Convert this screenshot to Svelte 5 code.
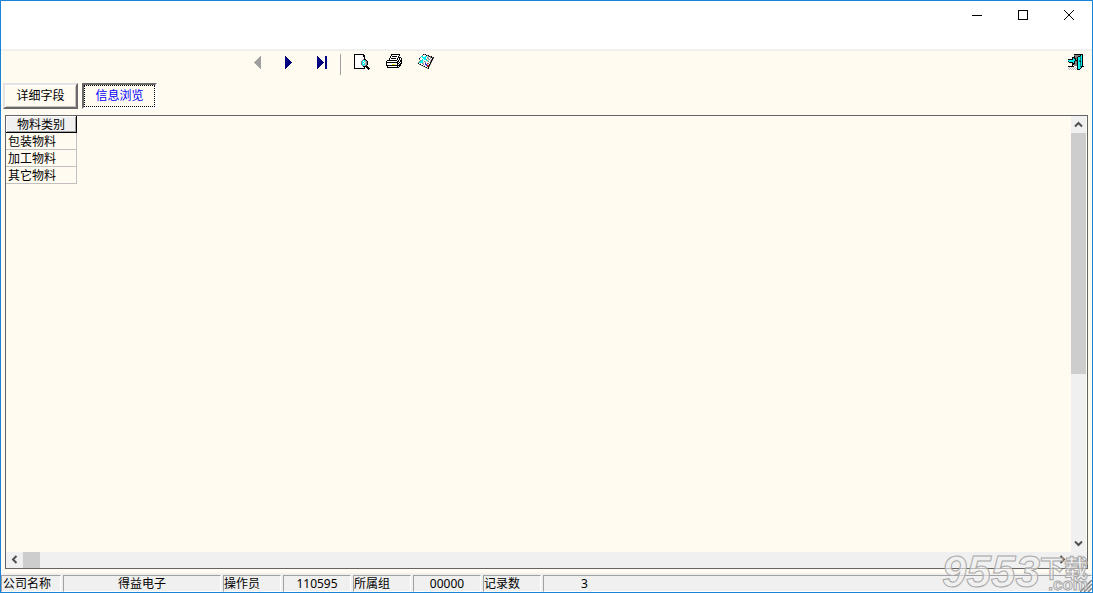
<script lang="ts">
    const colors = {
        k: '#000000',
        w: '#ffffff',
        c: '#00f0f0',
        t: '#008080',
        g: '#808080',
        l: '#c0c0c0',
        y: '#e6e600',
        b: '#2030e0',
        r: '#d02020'
    };

    // one character per pixel, a dot is transparent
    const preview = [
        'kkkkkkkkkk......',
        'kwwwwwwwwkk.....',
        'kwwwwwwwwkk.....',
        'kwwwwwwwwwk.....',
        'kwwwwwwwwwk.....',
        'kwwwwwwwwgkk....',
        'kwwwwwwwgccgk...',
        'kwwwwwwgcwclgk..',
        'kwwwwwwgccwlgk..',
        'kwwwwwwgcwclgk..',
        'kwwwwwwgccclgk..',
        'kwwwwwwwgclgk...',
        'kwwwwwwwwkkkkk..',
        'kwwwwwwwwwk.kkk.',
        'kkkkkkkkkkk..kkk',
        '..............k.'
    ];

    const printer = [
        '.....kkkkkkkkk..',
        '.....kwwwwwwwk..',
        '....kwkkkkkwk...',
        '....kwwwwwwwkkk.',
        '...kwkkkkkwkwkwk',
        '...kwwwwwwwkwkwk',
        '.kkkkkkkkkkwkwkk',
        'kwwwwwwwwwwkkwkk',
        'kkkkkkkkkkkkwkwk',
        'kwwwwwwwwwwkkwkk',
        'kwwwwwyyywwkwkk.',
        'kkkkkkkkkkkkkkk.',
        '.kwwwwwwwwwkwk..',
        '.kkkkkkkkkkkk...',
        '................',
        '................'
    ];

    const report = [
        '.....kgk........',
        '....gwwwkgk.....',
        '...ccwwccwgkgk..',
        '..gwccccwglwgkgk',
        '.kwwwcccwlgwlwkg',
        '.gwwcwccgwlgwgk.',
        '..gcclwwcclwlkg.',
        '.gcccwglwlgwgk..',
        'gcccclwgwwwlkg..',
        'kwlwglwbwrgwk...',
        '.gkwwgwbblwkg...',
        '...gkwlwbrrk....',
        '.....gkwwrkg....',
        '.......gkwk.....',
        '.........gk.....',
        '................'
    ];

    const door = [
        '......kkkkkkkkk.',
        '......ggggggkck.',
        '......kgggkktck.',
        '....kkkggkcctck.',
        '....kckkgkcctck.',
        'kkkkkcckgkcctck.',
        'ccccccckkkcttck.',
        'kccccckggkctkck.',
        '.kkkkckggkcctck.',
        '....kkkggkcctck.',
        '....kkgggkcctck.',
        '....k.gggkcctck.',
        'kkkkkkwwwkcctkkk',
        '.l.l.l.lwkccck..',
        'l.l.l.l.lkcck...',
        '.l.l.l.l.kkk....'
    ];

    const status = [
        { text: '公司名称', size: 'first' },
        { text: '得益电子', size: 'wide' },
        { text: '操作员', size: 'label' },
        { text: '110595', size: 'value' },
        { text: '所属组', size: 'label' },
        { text: '00000', size: 'value' },
        { text: '记录数', size: 'label' },
        { text: '3', size: 'count' }
    ];

    const rows = ['包装物料', '加工物料', '其它物料'];
    const tabs = ['详细字段', '信息浏览'];
    let tab = $state(1);
</script>

{#snippet pixels(map)}
    <svg width="16" height="16" viewBox="0 0 16 16" shape-rendering="crispEdges" aria-hidden="true">
        {#each map as line, y}
            {#each line.split('') as p, x}
                {#if p != '.'}
                    <rect {x} {y} width="1" height="1" fill={colors[p]} />
                {/if}
            {/each}
        {/each}
    </svg>
{/snippet}

{#snippet chevron(d)}
    <svg width="9" height="9" viewBox="0 0 9 9" aria-hidden="true">
        <path {d} fill="none" stroke="#505050" stroke-width="2" />
    </svg>
{/snippet}

<div class="window">
    <header class="titlebar">
        <button aria-label="最小化">
            <svg width="10" height="10" viewBox="0 0 10 10"><path d="M0 5.5h10" /></svg>
        </button>
        <button aria-label="最大化">
            <svg width="10" height="10" viewBox="0 0 10 10"><path d="M.5.5h9v9h-9z" /></svg>
        </button>
        <button aria-label="关闭">
            <svg class="smooth" width="10" height="10" viewBox="0 0 10 10"><path d="M0 0l10 10M10 0l-10 10" /></svg>
        </button>
    </header>

    <div class="toolbar">
        <button aria-label="上一条" disabled>
            <svg width="16" height="16" viewBox="0 0 16 16" shape-rendering="crispEdges"><path d="M11 2v13L4 8.5z" fill="#a0a0a0" /></svg>
        </button>
        <button aria-label="下一条">
            <svg width="16" height="16" viewBox="0 0 16 16" shape-rendering="crispEdges"><path d="M3 2v13l7-6.5z" fill="#000080" /></svg>
        </button>
        <button aria-label="最后一条">
            <svg width="16" height="16" viewBox="0 0 16 16" shape-rendering="crispEdges"><path d="M3 2v13l7-6.5zM11 2h2v13h-2z" fill="#000080" /></svg>
        </button>
        <span class="sep"></span>
        <button aria-label="预览">{@render pixels(preview)}</button>
        <button aria-label="打印">{@render pixels(printer)}</button>
        <button aria-label="报表">{@render pixels(report)}</button>
        <button class="exit" aria-label="退出">{@render pixels(door)}</button>
    </div>

    <div class="tabs">
        {#each tabs as name, i}
            <button class:active={tab == i} onclick={() => (tab = i)}>{name}</button>
        {/each}
    </div>

    <main class="grid">
        <div class="data">
            <table>
                <thead>
                    <tr><th>物料类别</th></tr>
                </thead>
                <tbody>
                    {#each rows as row}
                        <tr><td>{row}</td></tr>
                    {/each}
                </tbody>
            </table>
        </div>
        <div class="vbar">
            <button aria-label="向上滚动">{@render chevron('M1 6.5L4.5 3L8 6.5')}</button>
            <div class="track"><div class="thumb"></div></div>
            <button aria-label="向下滚动">{@render chevron('M1 2.5L4.5 6L8 2.5')}</button>
        </div>
        <div class="hbar">
            <button aria-label="向左滚动">{@render chevron('M6.5 1L3 4.5L6.5 8')}</button>
            <div class="track"><div class="thumb"></div></div>
            <button aria-label="向右滚动">{@render chevron('M2.5 1L6 4.5L2.5 8')}</button>
        </div>
        <div class="corner"></div>
    </main>

    <footer class="status">
        {#each status as cell}
            <span class="cell {cell.size}">{cell.text}</span>
        {/each}
        <svg class="grip" width="12" height="12" viewBox="0 0 12 12" aria-hidden="true">
            <path d="M0 12L12 0M4 12L12 4M8 12L12 8" fill="none" stroke="#808080" stroke-width="1.5" />
        </svg>
    </footer>

    <div class="mark">
        <span class="num">9553</span>
        <span class="side"><span class="down">下载</span><span class="com">.com</span></span>
    </div>
</div>

<style>
    :global(body) {
        margin: 0;
    }

    .window {
        position: relative;
        box-sizing: border-box;
        height: 100vh;
        display: flex;
        flex-direction: column;
        border: 1px solid #1883d7;
        background: #fffbf0;
        color: #000;
        font: 12px/16px "Noto Sans", "Noto Sans CJK SC", sans-serif;
    }

    button {
        display: flex;
        align-items: center;
        justify-content: center;
        padding: 0;
        border: none;
        background: none;
        font: inherit;
        color: inherit;
    }

    svg {
        display: block;
    }

    .titlebar {
        display: flex;
        justify-content: flex-end;
        height: 48px;
        background: #fff;
        border-bottom: 2px solid #f0f0f0;
    }

    .titlebar button {
        width: 46px;
        height: 28px;
    }

    .titlebar path {
        fill: none;
        stroke: #000;
        shape-rendering: crispEdges;
    }

    .titlebar .smooth path {
        shape-rendering: auto;
    }

    .toolbar {
        box-sizing: border-box;
        display: flex;
        align-items: flex-start;
        gap: 16px;
        padding: 3px 8px 0 249px;
        height: 30px;
    }

    .sep {
        width: 1px;
        height: 21px;
        margin: 0 -3px 0 -6px;
        background: #a0a0a0;
    }

    .exit {
        margin-left: auto;
    }

    .tabs {
        display: flex;
        gap: 4px;
        padding: 2px;
    }

    .tabs button {
        box-sizing: border-box;
        width: 75px;
        height: 26px;
        border: 2px solid;
        border-color: #e3e3e3 #696969 #696969 #e3e3e3;
        box-shadow: inset 1px 1px #fff, inset -1px -1px #c8c4bc;
    }

    .tabs .active {
        border-color: #696969 #fff #fff #696969;
        box-shadow: none;
        outline: 1px dotted #000;
        outline-offset: -3px;
        color: #00f;
    }

    .grid {
        flex: 1;
        min-height: 0;
        display: grid;
        grid-template-columns: 1fr 16px;
        grid-template-rows: 1fr 16px;
        margin: 4px;
        border: 1px solid #646464;
    }

    .data {
        overflow: hidden;
    }

    table {
        border-collapse: separate;
        border-spacing: 0;
    }

    th,
    td {
        box-sizing: border-box;
        width: 71px;
        height: 17px;
        line-height: 15px;
        white-space: nowrap;
    }

    th {
        padding: 0;
        font-weight: normal;
        text-align: center;
        background: #f0f0f0;
        border-right: 1px solid #000;
        border-bottom: 1px solid #000;
        box-shadow: inset 1px 1px #fff, inset -1px -1px #a0a0a0;
    }

    td {
        padding: 0 2px;
        border-right: 1px solid #c0c0c0;
        border-bottom: 1px solid #c0c0c0;
    }

    .vbar,
    .hbar {
        display: flex;
        background: #f0f0f0;
    }

    .vbar {
        flex-direction: column;
        border-right: 1px solid #fffbf0;
    }

    .track {
        display: flex;
        flex: 1;
        flex-direction: inherit;
    }

    .vbar button {
        width: 15px;
        height: 17px;
    }

    .hbar button {
        width: 17px;
        height: 15px;
    }

    .thumb {
        background: #cdcdcd;
    }

    .vbar .thumb {
        height: 60%;
    }

    .hbar .thumb {
        width: 17px;
    }

    .corner {
        background: #f0f0f0;
    }

    .status {
        display: flex;
        gap: 2px;
        height: 19px;
        background: #f0f0f0;
    }

    .cell {
        box-sizing: border-box;
        margin-top: 2px;
        border: 1px solid;
        border-color: #a0a0a0 #fff #fff #a0a0a0;
        line-height: 16px;
        white-space: nowrap;
    }

    .first {
        width: 60px;
        padding-left: 1px;
    }

    .wide {
        width: 158px;
        text-align: center;
    }

    .label {
        width: 58px;
    }

    .value {
        width: 68px;
        text-align: center;
    }

    .count {
        flex: 1;
        padding-left: 37px;
    }

    .grip {
        position: absolute;
        right: 0;
        bottom: 0;
    }

    .mark {
        position: absolute;
        right: 4px;
        bottom: 2px;
        display: flex;
        align-items: flex-end;
        font-family: "Liberation Sans", "Noto Sans CJK SC", sans-serif;
        font-weight: bold;
        color: rgba(240, 240, 240, 0.6);
        -webkit-text-stroke: 1px #a8a8a8;
        pointer-events: none;
    }

    .num {
        font-size: 44px;
        line-height: 36px;
        font-style: italic;
    }

    .side {
        display: flex;
        flex-direction: column;
        align-items: flex-end;
    }

    .down {
        font-size: 24px;
        line-height: 22px;
    }

    .com {
        font-size: 17px;
        line-height: 10px;
    }
</style>
